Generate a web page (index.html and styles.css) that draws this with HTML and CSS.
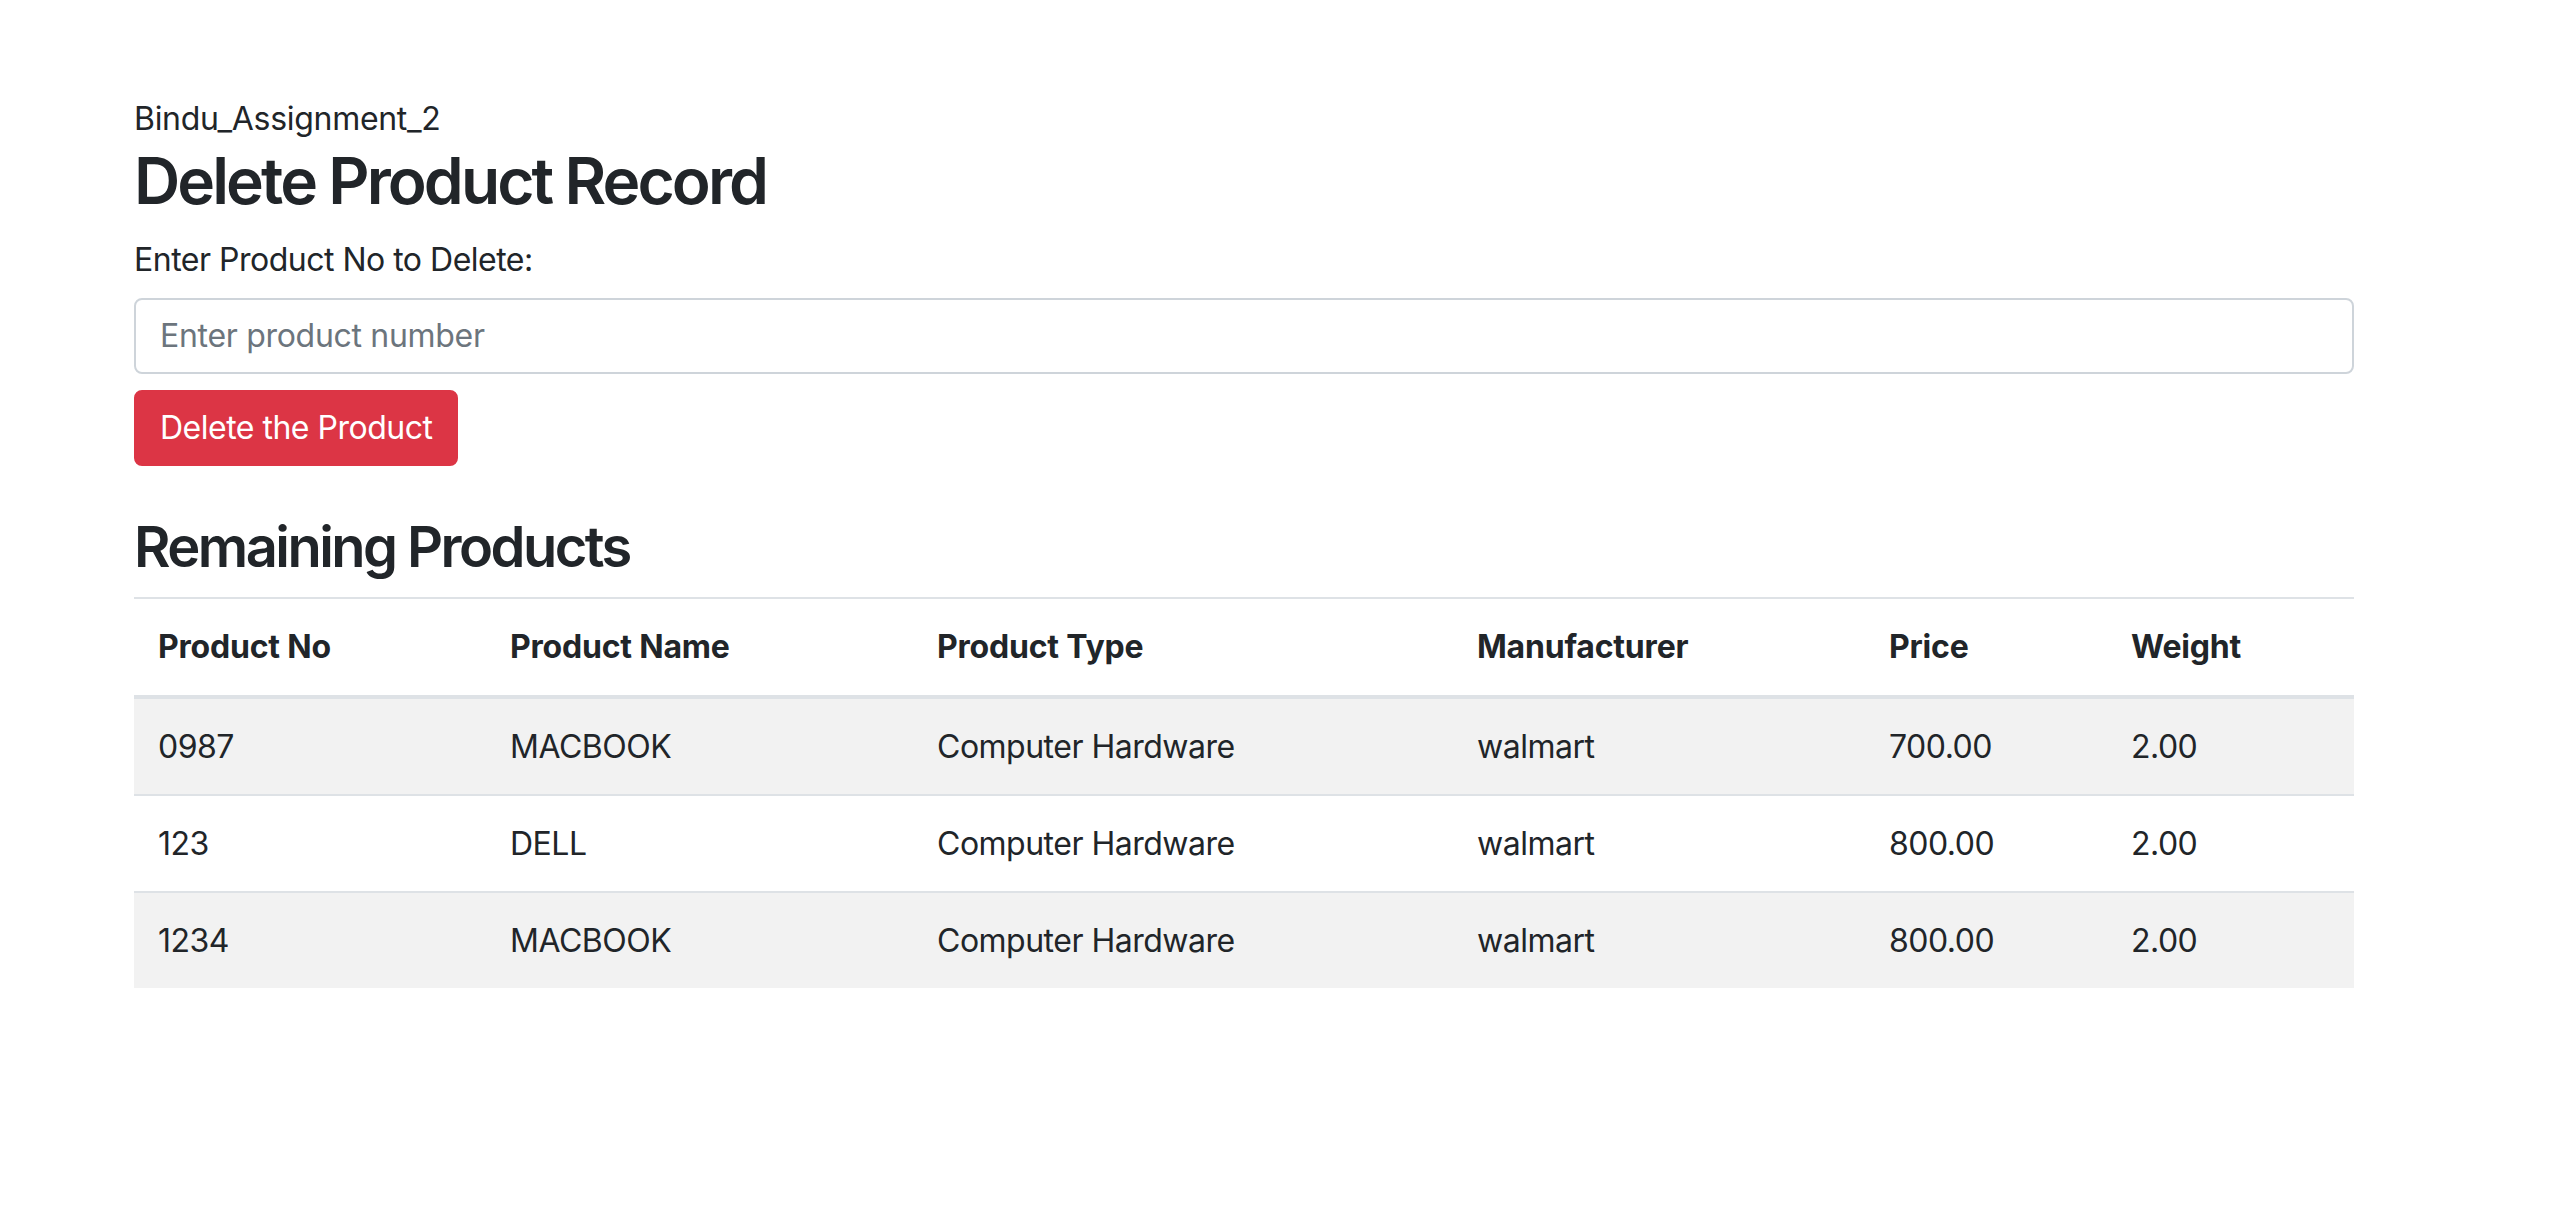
FILE: index.html
```html
<!DOCTYPE html>
<html lang="en">
<head>
<meta charset="utf-8">
<title>Delete Product Record</title>
<link rel="stylesheet" href="styles.css">
</head>
<body>
<div class="container">
  <div class="brand">Bindu_Assignment_2</div>
  <h2 class="title">Delete Product Record</h2>
  <form class="delete-form">
    <label class="field-label" for="productNo">Enter Product No to Delete:</label>
    <input class="form-control" id="productNo" type="text" placeholder="Enter product number">
    <button class="btn-danger" type="button">Delete the Product</button>
  </form>
  <h3 class="subtitle">Remaining Products</h3>
  <table class="products">
    <thead>
      <tr>
        <th class="c-no">Product No</th>
        <th class="c-name">Product Name</th>
        <th class="c-type">Product Type</th>
        <th class="c-man">Manufacturer</th>
        <th class="c-price">Price</th>
        <th class="c-weight">Weight</th>
      </tr>
    </thead>
    <tbody>
      <tr>
        <td>0987</td><td>MACBOOK</td><td>Computer Hardware</td><td>walmart</td><td>700.00</td><td>2.00</td>
      </tr>
      <tr>
        <td>123</td><td>DELL</td><td>Computer Hardware</td><td>walmart</td><td>800.00</td><td>2.00</td>
      </tr>
      <tr>
        <td>1234</td><td>MACBOOK</td><td>Computer Hardware</td><td>walmart</td><td>800.00</td><td>2.00</td>
      </tr>
    </tbody>
  </table>
</div>
</body>
</html>
```

FILE: styles.css
```css
html, body {
  margin: 0;
  padding: 0;
  background: #ffffff;
}

body {
  font-family: Inter, "Noto Sans", "Liberation Sans", sans-serif;
  font-size: 32px;
  line-height: 1.5;
  color: #212529;
}

.container {
  width: 2220px;
  margin-left: 134px;
  padding-top: 95px;
}

.brand {
  font-size: 32px;
  line-height: 48px;
  letter-spacing: -0.3px;
}

.title {
  margin: 0 0 16px;
  font-size: 64px;
  font-weight: 600;
  line-height: 76.8px;
  letter-spacing: -2.9px;
}

.delete-form {
  display: flex;
  flex-direction: column;
  align-items: flex-start;
}

.field-label {
  display: inline-block;
  margin-bottom: 14px;
  letter-spacing: -0.5px;
}

.form-control {
  box-sizing: border-box;
  width: 100%;
  height: 76px;
  padding: 12px 24px;
  margin: 0 0 16px;
  font-family: inherit;
  font-size: 32px;
  line-height: 48px;
  color: #495057;
  background: #fff;
  border: 2px solid #ced4da;
  border-radius: 8px;
  outline: none;
  letter-spacing: -0.3px;
}

.form-control::placeholder {
  color: #6c757d;
  opacity: 1;
}

.btn-danger {
  box-sizing: border-box;
  height: 76px;
  padding: 12px 24px;
  font-family: inherit;
  font-size: 32px;
  line-height: 48px;
  font-weight: 400;
  color: #fff;
  background: #dc3545;
  border: 2px solid #dc3545;
  border-radius: 8px;
  letter-spacing: -0.5px;
  cursor: pointer;
}

.subtitle {
  margin: 48px 0 16px;
  font-size: 56px;
  font-weight: 600;
  line-height: 67.2px;
  letter-spacing: -2.55px;
}

.products {
  width: 100%;
  border-collapse: collapse;
  table-layout: fixed;
  color: #212529;
}

.products th,
.products td {
  padding: 24px;
  text-align: left;
  vertical-align: top;
  border-top: 2px solid #dee2e6;
  letter-spacing: -0.5px;
  white-space: nowrap;
}

.products td {
  padding-top: 23.5px;
  padding-bottom: 23.5px;
}

.products thead th {
  font-weight: 700;
  letter-spacing: -0.2px;
  border-bottom: 4px solid #dee2e6;
}

.products tbody tr:nth-child(odd) {
  background: #f2f2f2;
}

.c-no { width: 304px; }
.c-name { width: 379px; }
.c-type { width: 492px; }
.c-man { width: 364px; }
.c-price { width: 194px; }
.c-weight { width: auto; }
```
